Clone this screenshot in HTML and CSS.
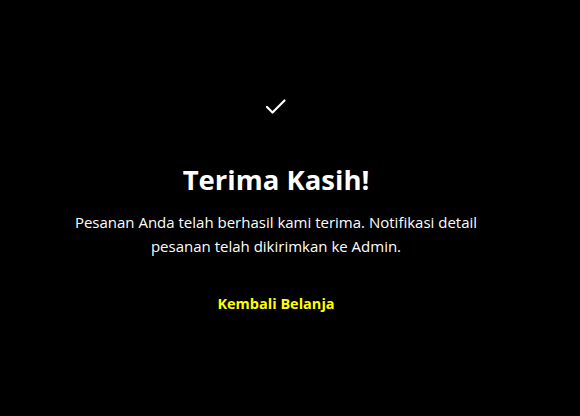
FILE: index.html
```
<!DOCTYPE html>
<html lang="id">
<head>
<meta charset="utf-8">
<link rel="stylesheet" href="styles.css">
</head>
<body>
<main class="page">
  <div class="card">
    <svg class="check" width="24" height="24" viewBox="0 0 24 24" fill="none" stroke="#fff" stroke-width="2.2" stroke-linecap="round" stroke-linejoin="round"><polyline points="3,13 8.5,18.5 20.5,6.5"/></svg>
    <h1 class="title">Terima Kasih!</h1>
    <p class="text">Pesanan Anda telah berhasil kami terima. Notifikasi detail pesanan telah dikirimkan ke Admin.</p>
    <a class="back" href="#">Kembali Belanja</a>
  </div>
</main>
</body>
</html>
```
FILE: styles.css
```
html, body { margin: 0; padding: 0; background: #000; }
body { font-family: "Open Sans", "Noto Sans", sans-serif; color: #fff; }
.page { width: 552px; display: flex; justify-content: center; padding-top: 94px; }
.card { display: flex; flex-direction: column; align-items: center; text-align: center; width: 430px; }
.check { display: block; }
.title { margin: 44px 0 0; font-size: 27.5px; font-weight: 700; line-height: 36px; }
.text { margin: 12px 0 0; font-size: 15px; line-height: 24px; }
.back { margin-top: 36px; color: #ff0; font-weight: 700; font-size: 14.5px; text-decoration: none; }
```
